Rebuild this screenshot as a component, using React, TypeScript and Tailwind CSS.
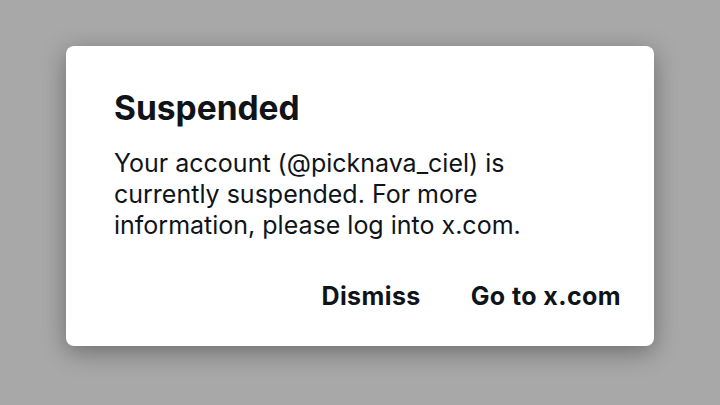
export default function App() {
  return (
    <div className="w-[720px] h-[405px] bg-[#a8a8a8] flex items-start justify-center pt-[46px]" style={{ fontFamily: "Inter, Roboto, sans-serif" }}>
      <div className="w-[588px] h-[300px] bg-white rounded-[8px] shadow-[0_6px_24px_rgba(0,0,0,0.35)] pl-[48px] pr-[33px] pt-[42px] flex flex-col">
        <h1 className="text-[33.5px] leading-[40px] font-bold text-[#0f1419]">Suspended</h1>
        <p className="mt-[20px] text-[25px] leading-[31px] text-[#0f1419] w-[460px]">
          Your account (@picknava_ciel) is currently suspended. For more information, please log into x.com.
        </p>
        <div className="mt-auto mb-[34px] flex justify-end gap-[50px] text-[25px] tracking-[0.4px] leading-[31px] font-bold text-[#0f1419]">
          <span>Dismiss</span>
          <span>Go to x.com</span>
        </div>
      </div>
    </div>
  );
}
